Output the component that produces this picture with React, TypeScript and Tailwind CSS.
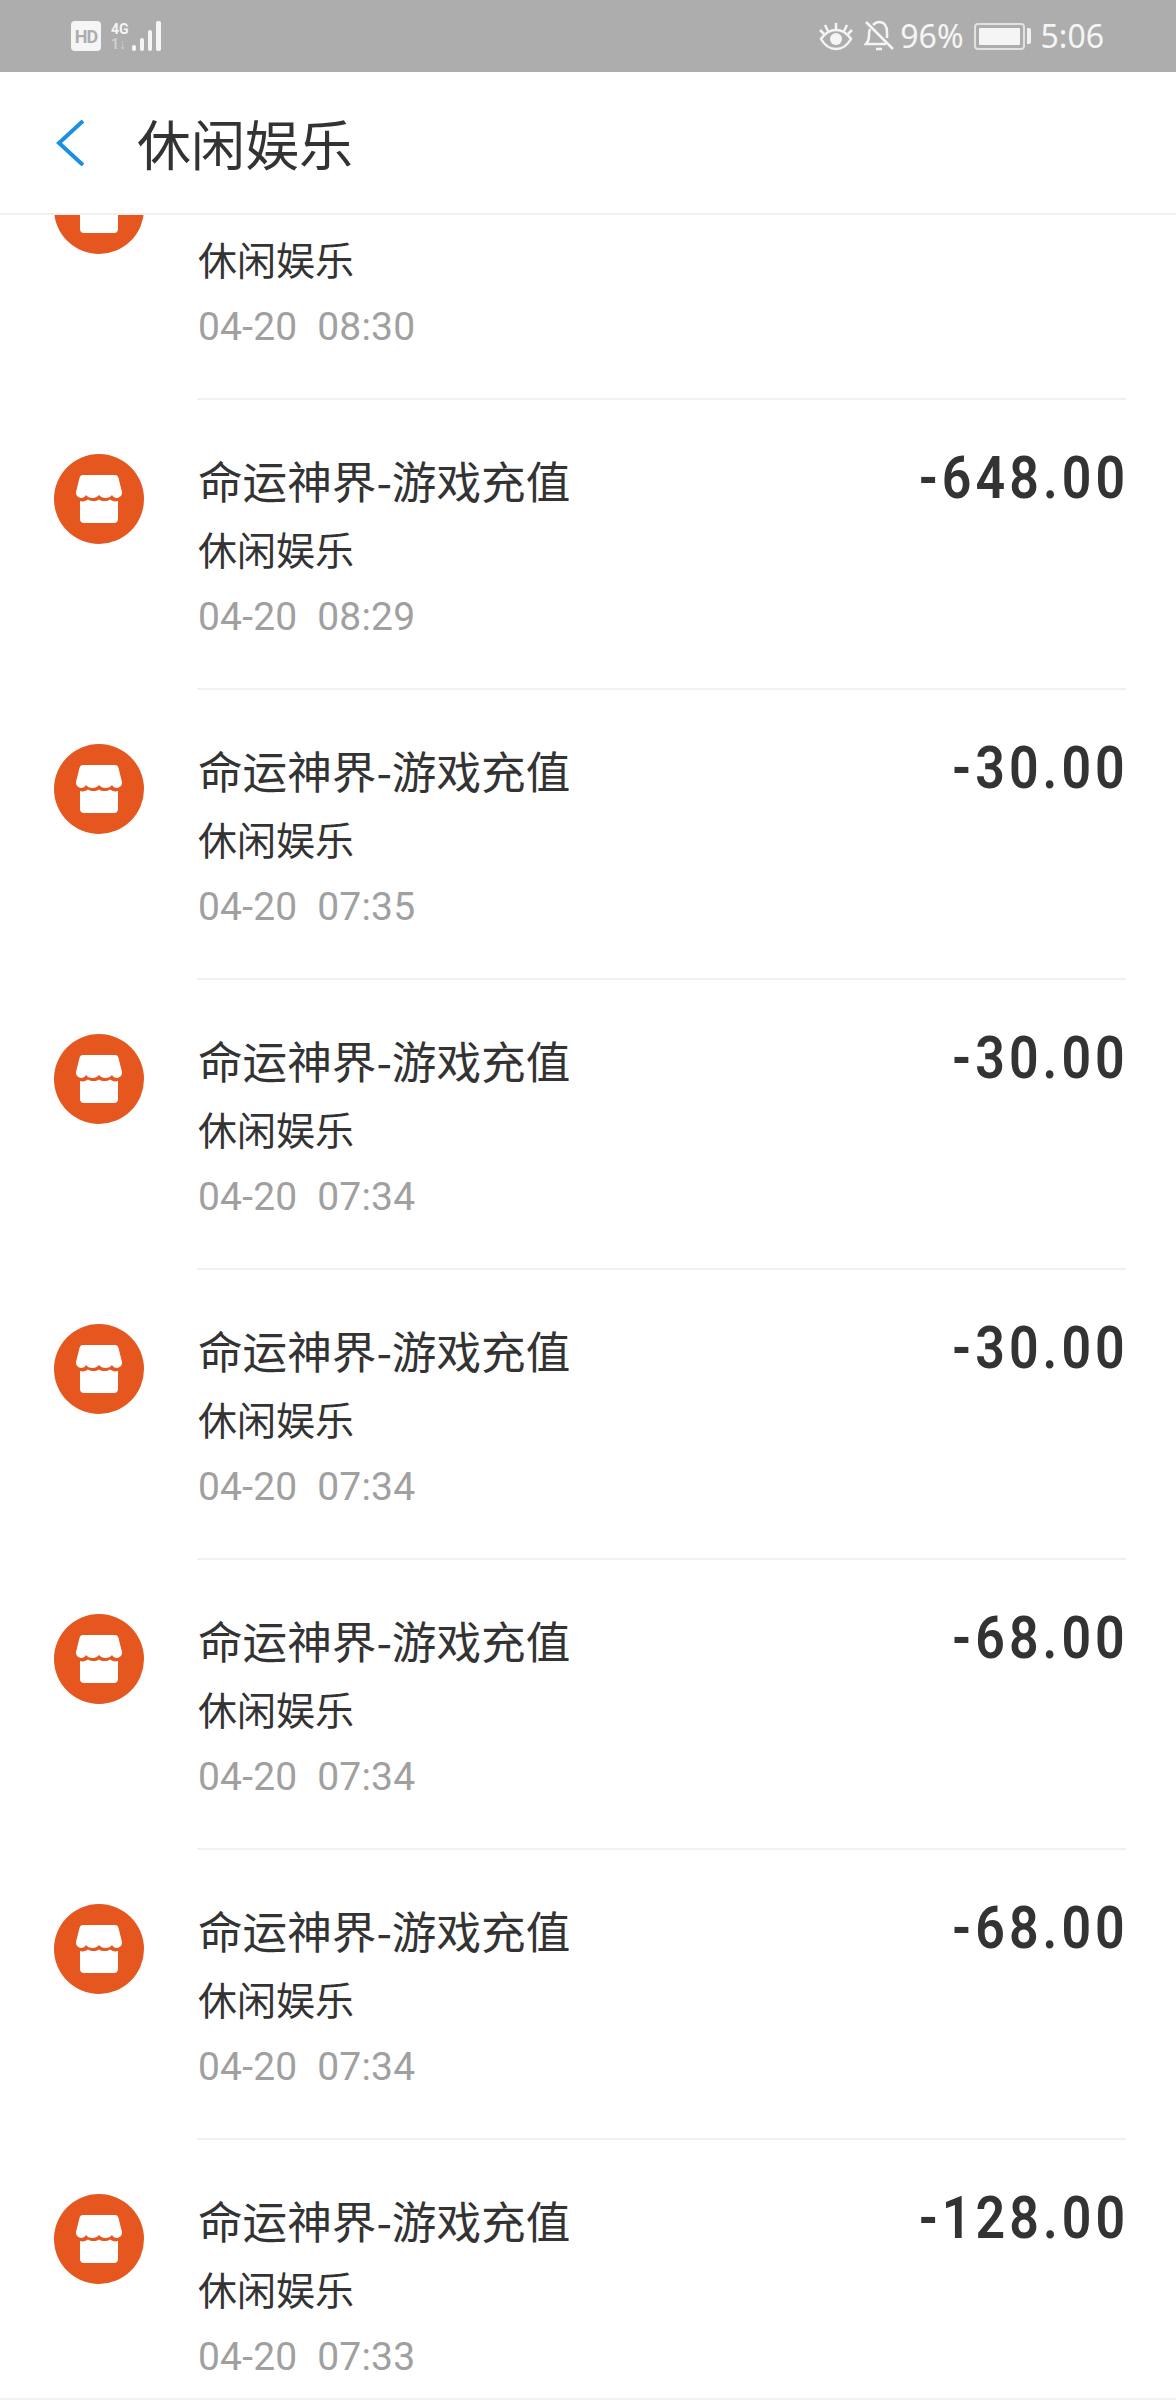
const ROWS = [
  { time: '04-20  08:30', amount: '' },
  { time: '04-20  08:29', amount: '-648.00' },
  { time: '04-20  07:35', amount: '-30.00' },
  { time: '04-20  07:34', amount: '-30.00' },
  { time: '04-20  07:34', amount: '-30.00' },
  { time: '04-20  07:34', amount: '-68.00' },
  { time: '04-20  07:34', amount: '-68.00' },
  { time: '04-20  07:33', amount: '-128.00' },
];

const CJK = "font-['Noto_Sans_CJK_SC','Noto_Sans',sans-serif]";

function StoreIcon() {
  return (
    <div className="h-[90px] w-[90px] shrink-0 rounded-full bg-[#e5571f] flex items-center justify-center">
      <svg width="46" height="48" viewBox="0 0 46 48" fill="#fff">
        <path d="M7 0h32c2 0 3 1 3.500 3L46 17c.5 3-2 6-5 6-2.200 0-4-1-5-3-1.500 2-3.500 3-6.500 3-2.500 0-5-1-6.500-3-1.500 2-4 3-6.500 3-3 0-5-1-6.500-3-1 2-2.800 3-5 3-3 0-5.500-3-5-6L3.500 3C4 1 5 0 7 0z" />
        <path d="M4 26c3 1 6 0 8-1.500 3 2 8 2 11 0 3 2 8 2 11 0 2 1.500 5 2.500 8 1.500v18c0 2.500-1.500 4-4 4H8c-2.500 0-4-1.500-4-4z" />
      </svg>
    </div>
  );
}

function Row({ time, amount }: { time: string; amount: string }) {
  return (
    <div className="flex pl-[54px] pr-[50px]">
      <div className="pt-[54px] mr-[53px]">
        <StoreIcon />
      </div>
      <div className="flex-1 h-[290px] border-b-2 border-[#f0f0f0] flex justify-between">
        <div className="pt-[47px] pl-[1px]">
          <div className={`${CJK} h-[66px] text-[44.6px] leading-[66px] text-[#333333] whitespace-nowrap`}>
            {amount ? '命运神界-游戏充值' : ''}
          </div>
          <div className={`${CJK} text-[39px] leading-[54px] mt-[8px] text-[#333333]`}>休闲娱乐</div>
          <div className="font-['Roboto',sans-serif] text-[39px] leading-[54px] mt-[15px] text-[#a0a0a0] whitespace-pre tracking-[0.2px]">
            {time}
          </div>
        </div>
        {amount && (
          <div className="pt-[43px] font-['Roboto',sans-serif] font-semibold text-[59px] leading-[70px] text-[#333333] tracking-[4.6px] -mr-[3px] scale-x-[0.88] origin-right">
            {amount}
          </div>
        )}
      </div>
    </div>
  );
}

function StatusBar() {
  return (
    <div className="h-[72px] bg-[#adadad] flex items-center justify-between pl-[71px] pr-[72px] text-[#f5f5f5]">
      <div className="flex items-center gap-[10px]">
        <div className="h-[30px] w-[30px] rounded-[4px] bg-[#f5f5f5] flex items-center justify-center font-['Roboto',sans-serif] font-bold text-[18px] tracking-[-1px] text-[#adadad]">
          HD
        </div>
        <div className="flex items-end">
          <div className="flex flex-col font-['Roboto',sans-serif] font-bold text-[14px] leading-[15px] w-[20px]">
            <span>4G</span>
            <span className="text-[#d0d0d0]">1↓</span>
          </div>
          <svg width="34" height="31" viewBox="0 0 34 31" fill="#f5f5f5">
            <rect x="1" y="24" width="4" height="6" rx="2" />
            <rect x="9" y="17" width="4" height="13" rx="2" />
            <rect x="17" y="9" width="4" height="21" rx="2" />
            <rect x="25" y="0" width="5" height="30" rx="2" />
          </svg>
        </div>
      </div>
      <div className="flex items-center">
        <svg width="34" height="30" viewBox="0 0 34 30" fill="none" stroke="#f5f5f5" strokeWidth="2.500" className="mr-[11px]">
          <path d="M2 18c4-6 9-9 15-9s11 3 15 9c-4 7-9 10-15 10S6 25 2 18z" />
          <circle cx="17" cy="18" r="6" fill="#f5f5f5" stroke="none" />
          <path d="M17 8V2M9 10 6 4M25 10l3-6M5 13 1 9M29 13l4-4" />
        </svg>
        <svg width="30" height="32" viewBox="0 0 30 32" fill="none" stroke="#f5f5f5" strokeWidth="2.500" className="mr-[6px]">
          <path d="M6 9c-1 2-1 4-1 7 0 4-1 6-3 8h20M9 5c1-1 3-3 6-3 5 0 8 4 8 10v6" />
          <path d="M2 2l27 27M12 29h6" />
        </svg>
        <span className="font-['Noto_Sans',sans-serif] text-[32px] leading-none mr-[10px]">96%</span>
        <div className="h-[27px] w-[51px] rounded-[4px] border-2 border-[#e2e2e2] p-[3px]">
          <div className="h-full w-full bg-[#f5f5f5] rounded-[1px]" />
        </div>
        <div className="h-[16px] w-[4px] ml-[2px] mr-[10px] rounded-r-[2px] bg-[#f0f0f0]" />
        <span className="font-['Noto_Sans',sans-serif] text-[32px] leading-none">5:06</span>
      </div>
    </div>
  );
}

export default function App() {
  return (
    <div className="h-[2400px] overflow-hidden bg-white border-b-2 border-[#f0f0f0]">
      <StatusBar />
      <div className="h-[143px] border-b-2 border-[#f0f0f0] flex items-center pl-[56px] relative z-10 bg-white">
        <svg width="28" height="46" viewBox="0 0 28 46" fill="none" stroke="#1a8fe3" strokeWidth="4">
          <path d="M27 1 3 23l24 22" />
        </svg>
        <div className={`${CJK} ml-[53px] text-[54px] leading-none text-[#333333] whitespace-nowrap`}>休闲娱乐</div>
      </div>
      <div className="-mt-[105px]">
        {ROWS.map((r, i) => (
          <Row key={i} time={r.time} amount={r.amount} />
        ))}
      </div>
    </div>
  );
}
